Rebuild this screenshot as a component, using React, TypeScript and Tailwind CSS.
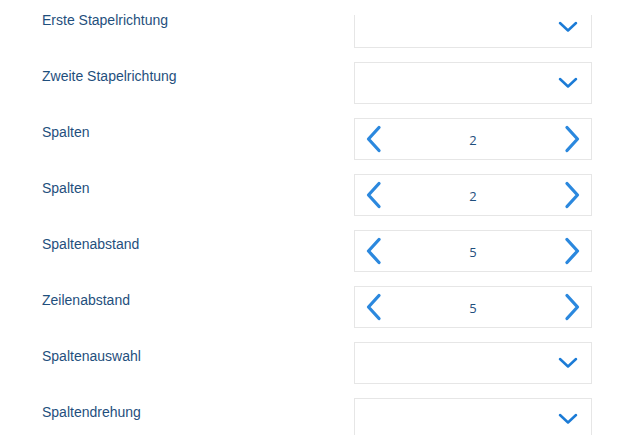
import React from "react";

type Row =
  | { label: string; kind: "select" }
  | { label: string; kind: "stepper"; value: number };

const rows: Row[] = [
  { label: "Erste Stapelrichtung", kind: "select" },
  { label: "Zweite Stapelrichtung", kind: "select" },
  { label: "Spalten", kind: "stepper", value: 2 },
  { label: "Spalten", kind: "stepper", value: 2 },
  { label: "Spaltenabstand", kind: "stepper", value: 5 },
  { label: "Zeilenabstand", kind: "stepper", value: 5 },
  { label: "Spaltenauswahl", kind: "select" },
  { label: "Spaltendrehung", kind: "select" },
];

function ChevronDown() {
  return (
    <svg width="20" height="12" viewBox="0 0 20 12" fill="none">
      <path d="M2 2 L10 9.5 L18 2" stroke="#1b7bd6" strokeWidth="2.5" strokeLinecap="round" strokeLinejoin="round" />
    </svg>
  );
}

function ChevronLeft() {
  return (
    <svg width="17" height="28" viewBox="0 0 17 28" fill="none">
      <path d="M14 2.5 L3.5 14 L14 25.5" stroke="#2b88de" strokeWidth="3.3" strokeLinecap="round" strokeLinejoin="round" />
    </svg>
  );
}

function ChevronRight() {
  return (
    <svg width="17" height="28" viewBox="0 0 17 28" fill="none">
      <path d="M3 2.5 L13.5 14 L3 25.5" stroke="#2b88de" strokeWidth="3.3" strokeLinecap="round" strokeLinejoin="round" />
    </svg>
  );
}

export default function App() {
  return (
    <div
      className="w-[629px] h-[435px] overflow-hidden bg-white pt-[6px]"
      style={{ fontFamily: '"Liberation Sans", Arial, sans-serif' }}
    >
      {rows.map((r, i) => (
        <div key={i} className="flex h-[42px] mb-[14px]">
          <div className="w-[354px] pl-[42px] pt-[6px] text-[14px] leading-[16px] text-[#1f4f7d]">
            {r.label}
          </div>
          <div
            className={
              "w-[238px] h-[42px] border border-[#e6e6e6] bg-white flex items-center " +
              (i === 0 ? "[clip-path:inset(9px_0_0_0)] " : "") +
              (r.kind === "select" ? "justify-end pr-[13px]" : "justify-between px-[10px]")
            }
          >
            {r.kind === "select" ? (
              <ChevronDown />
            ) : (
              <>
                <ChevronLeft />
                <span
                  className="text-[13px] leading-[16px] pt-[1px] text-[#1f4f7d]"
                  style={{ fontFamily: '"Open Sans", "Noto Sans", sans-serif' }}
                >
                  {r.value}
                </span>
                <ChevronRight />
              </>
            )}
          </div>
        </div>
      ))}
    </div>
  );
}
